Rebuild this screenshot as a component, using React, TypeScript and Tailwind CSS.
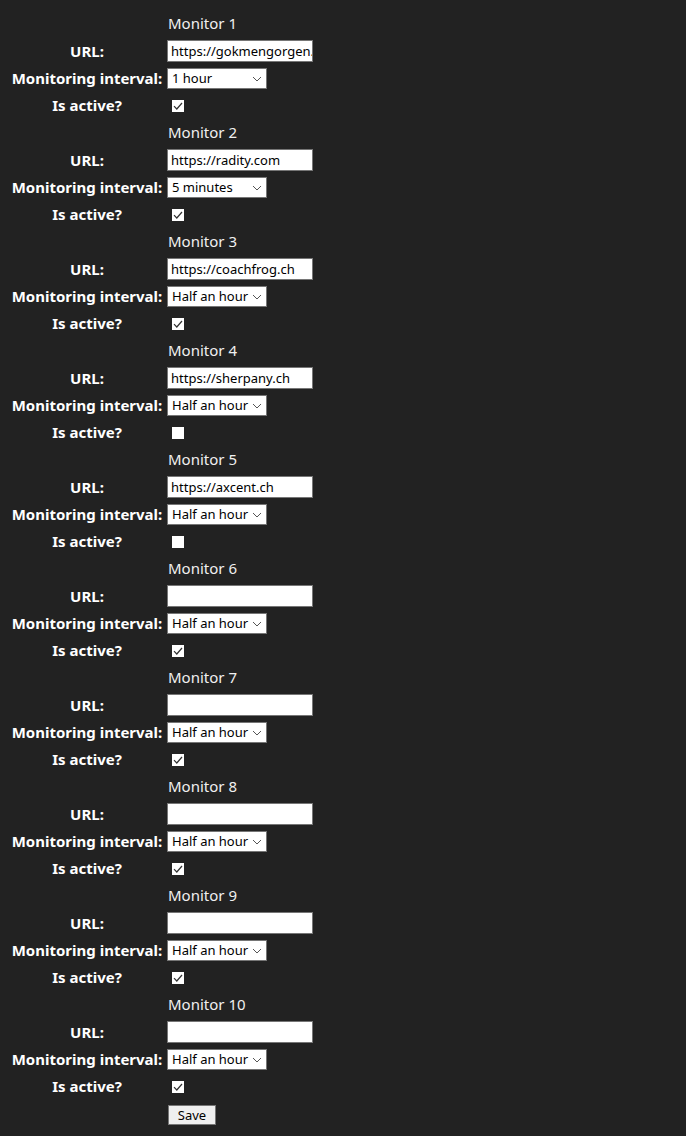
const monitors = [
  { url: "https://gokmengorgen.net", interval: "1 hour", active: true },
  { url: "https://radity.com", interval: "5 minutes", active: true },
  { url: "https://coachfrog.ch", interval: "Half an hour", active: true },
  { url: "https://sherpany.ch", interval: "Half an hour", active: false },
  { url: "https://axcent.ch", interval: "Half an hour", active: false },
  { url: "", interval: "Half an hour", active: true },
  { url: "", interval: "Half an hour", active: true },
  { url: "", interval: "Half an hour", active: true },
  { url: "", interval: "Half an hour", active: true },
  { url: "", interval: "Half an hour", active: true },
];

const Label = ({ children }: { children: React.ReactNode }) => (
  <div className="flex items-center justify-center font-bold text-white text-[15px]">{children}</div>
);

const Checkbox = ({ checked }: { checked: boolean }) => (
  <div className="ml-[5px] w-[12px] h-[12px] bg-white flex items-center justify-center">
    {checked && (
      <svg width="10" height="10" viewBox="0 0 10 10">
        <path d="M1 5.2 L3.8 8 L9 2" fill="none" stroke="#333" strokeWidth="1.2" />
      </svg>
    )}
  </div>
);

const Select = ({ value }: { value: string }) => (
  <div className="w-[100px] h-[21px] bg-white border border-[#767676] flex items-center justify-between pl-[4px] pr-[4px] text-[13px] text-black">
    <span>{value}</span>
    <svg width="10" height="6" viewBox="0 0 10 6">
      <path d="M1 1 L5 5 L9 1" fill="none" stroke="#555" strokeWidth="1" />
    </svg>
  </div>
);

export default function App() {
  return (
    <div className="min-h-screen bg-[#222222] pt-[10px] pl-[9px] pb-[12px]" style={{ fontFamily: '"Noto Sans", "Open Sans", sans-serif' }}>
      <div className="grid grid-cols-[156px_auto] gap-x-[2px] w-fit">
        {monitors.map((m, i) => (
          <div key={i} className="contents">
            <div className="h-[27px]" />
            <div className="h-[27px] flex items-center text-[15px] text-[#f0f0f0] pl-[1px]">Monitor {i + 1}</div>
            <Label>URL:</Label>
            <div className="h-[28px] flex items-center">
              <div className="w-[146px] h-[22px] bg-white border border-[#767676] px-[3px] text-[13px] text-black overflow-hidden whitespace-nowrap leading-[20px]">
                {m.url}
              </div>
            </div>
            <Label>Monitoring interval:</Label>
            <div className="h-[27px] flex items-center">
              <Select value={m.interval} />
            </div>
            <Label>Is active?</Label>
            <div className="h-[27px] flex items-center">
              <Checkbox checked={m.active} />
            </div>
          </div>
        ))}
        <div />
        <div className="h-[30px] flex items-center">
          <button className="ml-[1px] w-[48px] h-[20px] bg-[#efefef] border border-[#767676] text-[13px] text-black leading-none">Save</button>
        </div>
      </div>
    </div>
  );
}
